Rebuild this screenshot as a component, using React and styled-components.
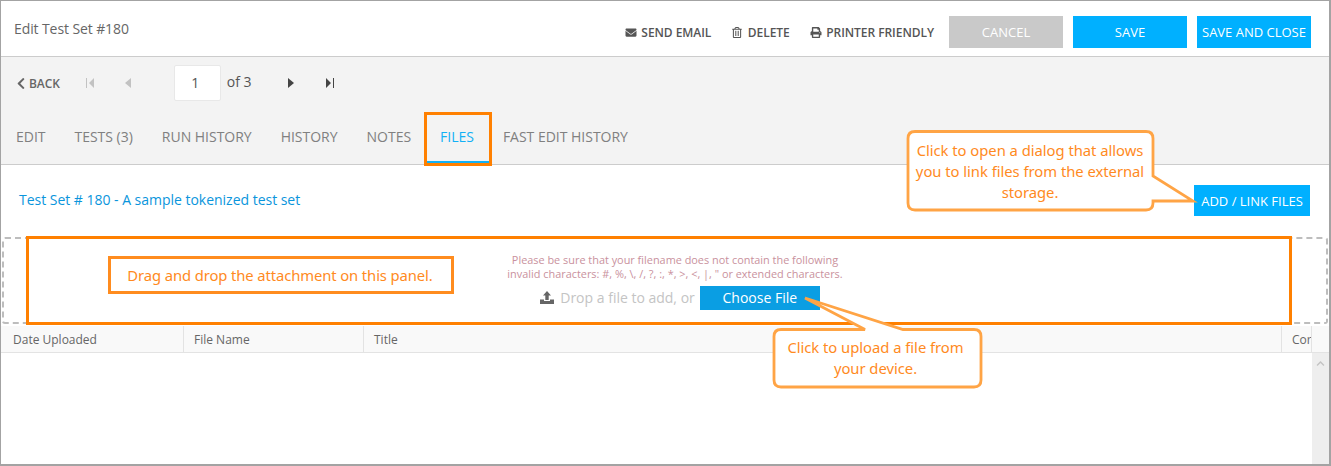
import styled, { createGlobalStyle } from "styled-components";
import { FaEnvelope, FaRegTrashAlt, FaPrint, FaChevronLeft, FaChevronUp } from "react-icons/fa";

const GlobalStyle = createGlobalStyle`
  html, body {
    margin: 0;
    padding: 0;
    background: #fff;
  }
  * {
    box-sizing: border-box;
  }
`;

function App() {
  return (
    <Page>
      <GlobalStyle />
      <Header>
        <PageTitle>Edit Test Set #180</PageTitle>
        <HeaderActions>
          <ActionLink>
            <FaEnvelope />
            SEND EMAIL
          </ActionLink>
          <ActionLink>
            <FaRegTrashAlt />
            DELETE
          </ActionLink>
          <ActionLink>
            <FaPrint />
            PRINTER FRIENDLY
          </ActionLink>
          <HeaderButton $muted>CANCEL</HeaderButton>
          <HeaderButton>SAVE</HeaderButton>
          <HeaderButton>SAVE AND CLOSE</HeaderButton>
        </HeaderActions>
      </Header>

      <Toolbar>
        <PagerRow>
          <BackLink>
            <FaChevronLeft />
            BACK
          </BackLink>
          <PagerIcon $off $left={26}>
            <svg viewBox="0 0 8 10" width="8" height="10">
              <path d="M0 0h1v10H0zM8 0v10L3 5z" />
            </svg>
          </PagerIcon>
          <PagerIcon $off $left={31}>
            <svg viewBox="0 0 6 10" width="6" height="10">
              <path d="M6 0v10L0 5z" />
            </svg>
          </PagerIcon>
          <PageInput>1</PageInput>
          <PageCount>of 3</PageCount>
          <PagerIcon $left={36}>
            <svg viewBox="0 0 6 10" width="6" height="10">
              <path d="M0 0v10l6-5z" />
            </svg>
          </PagerIcon>
          <PagerIcon $left={32}>
            <svg viewBox="0 0 8 10" width="8" height="10">
              <path d="M0 0v10l5-5zM7 0h1v10H7z" />
            </svg>
          </PagerIcon>
        </PagerRow>
        <Tabs>
          <Tab>EDIT</Tab>
          <Tab>TESTS (3)</Tab>
          <Tab>RUN HISTORY</Tab>
          <Tab>HISTORY</Tab>
          <Tab>NOTES</Tab>
          <Tab $active>FILES</Tab>
          <Tab>FAST EDIT HISTORY</Tab>
        </Tabs>
      </Toolbar>

      <TitleRow>
        <SetLink>Test Set # 180 - A sample tokenized test set</SetLink>
        <AddButton>ADD / LINK FILES</AddButton>
      </TitleRow>

      <DropZone>
        <Warning>
          Please be sure that your filename does not contain the following
          <br />
          invalid characters: #, %, \, /, ?, :, *, &gt;, &lt;, |, " or extended characters.
        </Warning>
        <DropRow>
          <svg viewBox="0 0 14 13" width="14" height="13" fill="#666">
            <path d="M7 0l4 4.4H8.7V9H5.3V4.4H3zM0 8.5h4V10h6V8.5h4V13H0z" />
          </svg>
          <DropText>Drop a file to add, or</DropText>
          <ChooseButton>Choose File</ChooseButton>
        </DropRow>
      </DropZone>

      <GridHead>
        <HeadCell $width={183}>Date Uploaded</HeadCell>
        <HeadCell $width={180}>File Name</HeadCell>
        <HeadCell $grow>Title</HeadCell>
        <HeadCell $width={30}>Cor</HeadCell>
        <HeadCell $width={17} />
      </GridHead>
      <GridBody>
        <Scrollbar>
          <FaChevronUp />
        </Scrollbar>
      </GridBody>

      <Highlight $x={424} $y={112} $w={68} $h={54} />
      <Highlight $x={26} $y={236} $w={1266} $h={89} />
      <DragNote>Drag and drop the attachment on this panel.</DragNote>

      <Bubble viewBox="0 0 1331 466">
        <path d="M915 131.5H1146q7 0 7 7V176L1193 201H1153V203q0 7-7 7H915q-7 0-7-7V138.5q0-7 7-7z" />
        <path d="M781 329.5H865L805 298L903 329.5H974q7 0 7 7V380q0 7-7 7H781q-7 0-7-7V336.5q0-7 7-7z" />
      </Bubble>
      <LinkNote>
        Click to open a dialog that allows
        <br />
        you to link files from the external
        <br />
        storage.
      </LinkNote>
      <UploadNote>
        Click to upload a file from
        <br />
        your device.
      </UploadNote>
    </Page>
  );
}

const Page = styled.div`
  position: relative;
  width: 1331px;
  height: 466px;
  overflow: hidden;
  border: 1px solid #a3a3a3;
  border-width: 1px 2px 2px 1px;
  font-family: "Open Sans", sans-serif;
  color: #666;
  background: #fff;
`;

const Header = styled.header`
  height: 56px;
  display: flex;
  align-items: center;
  justify-content: space-between;
  padding: 0 18px 0 13px;
  border-bottom: 1px solid #ccc;
`;

const PageTitle = styled.h1`
  margin: 0;
  font-size: 14px;
  font-weight: 400;
  letter-spacing: -0.1px;
  color: #666;
`;

const HeaderActions = styled.div`
  display: flex;
  align-items: center;
  margin-top: 7px;
`;

const ActionLink = styled.a`
  display: flex;
  align-items: center;
  gap: 4.5px;
  margin-right: 20px;
  font-size: 12px;
  font-weight: 600;
  letter-spacing: -0.05px;
  color: #555;

  & svg {
    width: 12px;
    height: 11px;
  }
`;

const HeaderButton = styled.button`
  width: 114px;
  height: 32px;
  margin-left: ${({ $muted }) => ($muted ? "-5px" : "10px")};
  padding: 0;
  border: 0;
  background: ${({ $muted }) => ($muted ? "#c9c9c9" : "#00b0ff")};
  color: #fff;
  font-family: inherit;
  font-size: 13px;
`;

const Toolbar = styled.div`
  height: 108px;
  background: #f3f3f3;
  border-bottom: 1px solid #ccc;
`;

const PagerRow = styled.div`
  display: flex;
  align-items: center;
  height: 52px;
  padding: 0 0 0 15px;
`;

const BackLink = styled.a`
  display: flex;
  align-items: center;
  gap: 3px;
  font-size: 12px;
  font-weight: 600;
  letter-spacing: -0.1px;
  color: #666;

  & svg {
    width: 10px;
    height: 13px;
  }
`;

const PagerIcon = styled.span`
  display: flex;
  margin-left: ${({ $left }) => $left}px;
  fill: ${({ $off }) => ($off ? "#c2c2c2" : "#444")};
`;

const PageInput = styled.div`
  width: 47px;
  height: 36px;
  margin-left: 43px;
  padding: 0 4px 2px 0;
  display: flex;
  align-items: center;
  justify-content: center;
  background: #fff;
  border: 1px solid #e8e8e8;
  border-radius: 2px;
  font-size: 14px;
  color: #555;
`;

const PageCount = styled.span`
  margin: -4px 0 0 6px;
  font-size: 14px;
  color: #555;
`;

const Tabs = styled.nav`
  display: flex;
  height: 55px;
  padding-left: 15px;
  gap: 29px;
`;

const Tab = styled.a`
  position: relative;
  padding-top: 18px;
  font-size: 14px;
  letter-spacing: -0.015px;
  color: ${({ $active }) => ($active ? "#12b0f5" : "#808080")};

  ${({ $active }) =>
    $active &&
    `&::after {
      content: "";
      position: absolute;
      left: -14px;
      right: -15px;
      bottom: 1px;
      height: 2px;
      background: #12b0f5;
    }`}
`;

const TitleRow = styled.div`
  height: 72px;
  display: flex;
  align-items: flex-start;
  justify-content: space-between;
  padding: 20px 19px 0 18px;
`;

const SetLink = styled.a`
  margin-top: 5px;
  font-size: 14px;
  letter-spacing: -0.02px;
  color: #0a95dc;
`;

const AddButton = styled.button`
  width: 116px;
  height: 31px;
  padding: 0;
  border: 0;
  background: #00b0ff;
  color: #fff;
  font-family: inherit;
  font-size: 13px;
`;

const DropZone = styled.div`
  height: 87px;
  margin: 0 1px 0 1px;
  padding: 14px 0 0 0;
  display: flex;
  flex-direction: column;
  align-items: center;
  border: 2px dashed #bdbdbd;
  border-radius: 3px;
`;

const Warning = styled.p`
  margin: 0 0 0 20px;
  width: 340px;
  text-align: center;
  font-size: 10.9px;
  line-height: 14px;
  color: #c9919d;
`;

const DropRow = styled.div`
  display: flex;
  align-items: center;
  margin: 5px 0 0 30px;

  & svg {
    margin-top: -2px;
  }
`;

const DropText = styled.span`
  margin: -2px 0 0 6px;
  font-size: 14px;
  color: #c4c4c4;
`;

const ChooseButton = styled.button`
  width: 120px;
  height: 24px;
  margin-left: 5px;
  padding: 0 0 2px 0;
  border: 0;
  background: #0a9ee3;
  color: #fff;
  font-family: inherit;
  font-size: 14px;
`;

const GridHead = styled.div`
  display: flex;
  height: 27px;
  margin-top: 2px;
  background: #f9f9f9;
  border-bottom: 1px solid #e3e3e3;
`;

const HeadCell = styled.div`
  ${({ $grow, $width }) => ($grow ? "flex: 1;" : `width: ${$width}px;`)}
  padding: 5px 0 0 10px;
  border-right: 1px solid #e3e3e3;
  font-size: 12px;
  color: #666;
  overflow: hidden;
  white-space: nowrap;

  &:first-child {
    padding-left: 12px;
  }

  &:last-child {
    border-right: 0;
  }
`;

const GridBody = styled.div`
  display: flex;
  justify-content: flex-end;
  height: 113px;
`;

const Scrollbar = styled.div`
  width: 17px;
  background: #eee;
  display: flex;
  justify-content: center;
  padding-top: 6px;

  & svg {
    width: 9px;
    height: 9px;
    color: #c4c4c4;
  }
`;

const Highlight = styled.div`
  position: absolute;
  left: ${({ $x }) => $x - 1}px;
  top: ${({ $y }) => $y - 1}px;
  width: ${({ $w }) => $w}px;
  height: ${({ $h }) => $h}px;
  border: 3px solid #ff8000;
  pointer-events: none;
`;

const DragNote = styled.div`
  position: absolute;
  left: 107px;
  top: 255px;
  width: 346px;
  height: 38px;
  padding-right: 2px;
  display: flex;
  align-items: center;
  justify-content: center;
  border: 3px solid #ff8c1f;
  font-family: "Noto Sans", sans-serif;
  font-size: 14.8px;
  letter-spacing: -0.1px;
  color: #ff8a1e;
`;

const Bubble = styled.svg`
  position: absolute;
  left: -1px;
  top: -1px;
  width: 1331px;
  height: 466px;
  fill: #fff;
  stroke: #ffa445;
  stroke-width: 2.8;
  pointer-events: none;
`;

const NoteText = styled.div`
  position: absolute;
  font-family: "Noto Sans", sans-serif;
  font-size: 14.8px;
  line-height: 21px;
  letter-spacing: -0.03px;
  text-align: center;
  color: #ff8a1e;
  white-space: nowrap;
`;

const LinkNote = styled(NoteText)`
  left: 906px;
  top: 139px;
  width: 246px;
`;

const UploadNote = styled(NoteText)`
  left: 771px;
  top: 336px;
  width: 207px;
`;

export default App;
